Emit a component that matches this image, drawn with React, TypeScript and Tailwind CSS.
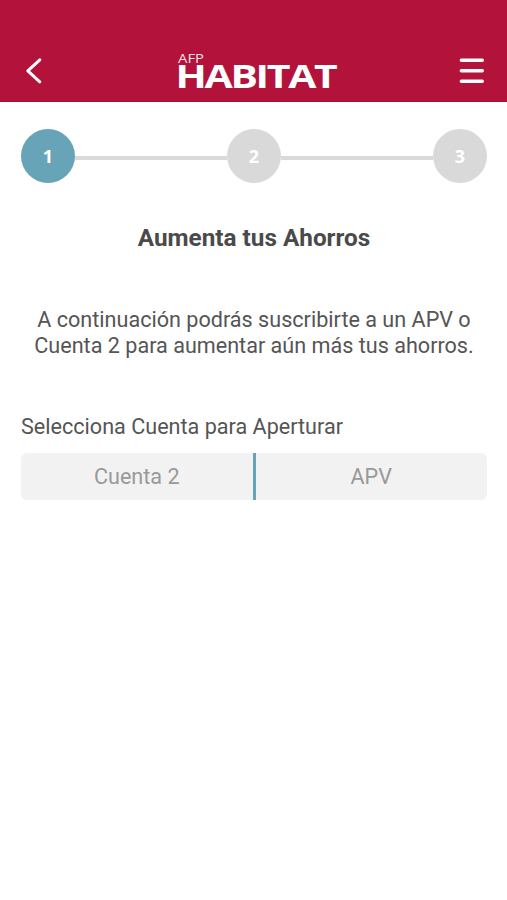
import { Fragment } from "react";
import clsx from "clsx";

const steps = [1, 2, 3];
const currentStep = 1;
const accounts = ["Cuenta 2", "APV"];

function Logo() {
  return (
    <svg
      width="170"
      height="56"
      viewBox="0 0 170 56"
      fill="#fff"
      role="img"
      aria-label="AFP Habitat"
      className="font-['Open_Sans',sans-serif]"
    >
      <text
        x="6"
        y="17.5"
        fontSize="12"
        textLength="26"
        lengthAdjust="spacingAndGlyphs"
        fillOpacity="0.9"
      >
        AFP
      </text>
      <text
        x="3.5"
        y="43"
        fontSize="32"
        fontWeight="700"
        letterSpacing="-1.8"
        textLength="160"
        lengthAdjust="spacingAndGlyphs"
      >
        HABITAT
      </text>
    </svg>
  );
}

function Header() {
  return (
    <header className="flex h-[102px] items-end justify-between border-b border-[#a01036] bg-[#b3123b] pr-[23px] pl-[25px]">
      <button type="button" aria-label="Volver" className="mb-[16px]">
        <svg
          width="18"
          height="28"
          viewBox="0 0 18 28"
          fill="none"
          stroke="#fff"
          strokeWidth="3"
          strokeLinecap="round"
          strokeLinejoin="round"
        >
          <path d="M14.8 2.8 2.8 13.8 14.8 24.8" />
        </svg>
      </button>
      <div className="ml-3">
        <Logo />
      </div>
      <button type="button" aria-label="Menú" className="mb-[17px]">
        <svg
          width="25"
          height="27"
          viewBox="0 0 25 27"
          stroke="#fff"
          strokeWidth="3.4"
          strokeLinecap="round"
        >
          <path d="M2.3 3.3h21M2.3 13.8h21M2.3 24.3h21" />
        </svg>
      </button>
    </header>
  );
}

function Stepper() {
  return (
    <div className="flex items-center">
      {steps.map((step, i) => (
        <Fragment key={step}>
          {i > 0 && <div className="mt-[3px] h-1 flex-1 bg-[#dadada]" />}
          <div
            className={clsx(
              "flex size-[54px] items-center justify-center rounded-full font-['Open_Sans',sans-serif] text-[18px] font-bold text-white",
              step === currentStep ? "bg-[#68a4b7]" : "bg-[#d9d9d9]",
            )}
          >
            {step}
          </div>
        </Fragment>
      ))}
    </div>
  );
}

export default function App() {
  return (
    <div className="min-h-screen bg-white font-[Roboto,sans-serif] text-[#555]">
      <Header />
      <main className="px-5 pt-[27px] pl-[21px]">
        <Stepper />
        <h1 className="mt-[39px] text-center text-[24.3px] leading-8 font-bold text-[#4a4a4a]">
          Aumenta tus Ahorros
        </h1>
        <p className="mt-[53px] text-center text-[21.6px] leading-[26px]">
          A continuación podrás suscribirte a un APV o
          <br />
          Cuenta 2 para aumentar aún más tus ahorros.
        </p>
        <h2 className="mt-[55px] text-[21.6px] leading-[26px]">
          Selecciona Cuenta para Aperturar
        </h2>
        <div className="mt-[13px] flex h-[47px] overflow-hidden rounded-md bg-[#f2f2f2] text-[21.6px] text-[#999]">
          {accounts.map((account, i) => (
            <button
              key={account}
              type="button"
              className={clsx(
                "flex-1 pt-0.5",
                i > 0 && "border-l-[3px] border-[#68a4b7]",
              )}
            >
              {account}
            </button>
          ))}
        </div>
      </main>
    </div>
  );
}
